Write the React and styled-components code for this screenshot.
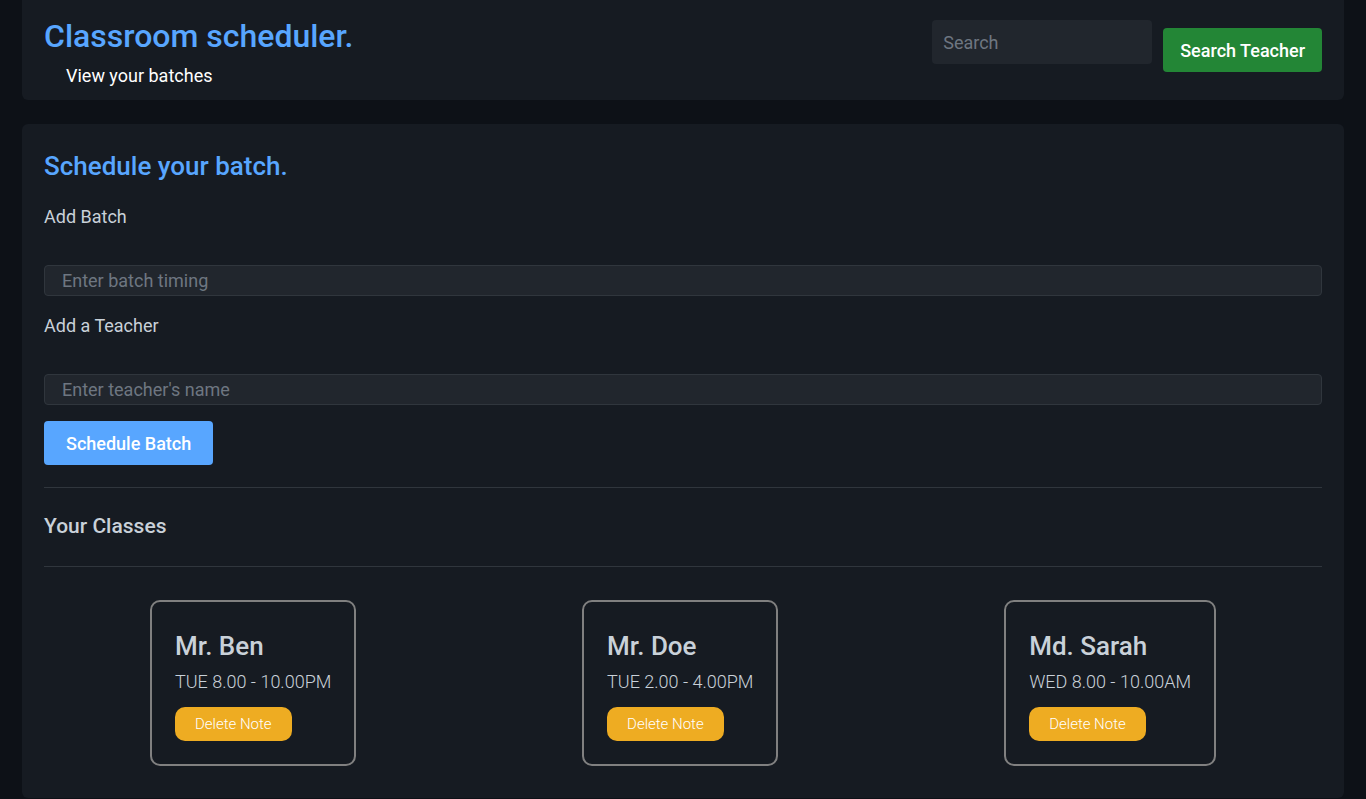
import React from "react";
import styled, {createGlobalStyle} from "styled-components";

const GlobalStyle = createGlobalStyle`
  body {
    margin: 0;
    background: #0d1117;
    font-family: Roboto, "Liberation Sans", sans-serif;
    color: #c9d1d9;
  }
`;

const Page = styled.div`
  padding: 0 22px 2px;
  display: flex;
  flex-direction: column;
  gap: 24px;
`;

const Header = styled.header`
  background: #161b22;
  border-radius: 0 0 6px 6px;
  height: 100px;
  box-sizing: border-box;
  padding: 0 22px;
  display: flex;
  justify-content: space-between;
`;

const Brand = styled.div`
  padding-top: 17px;
`;

const Title = styled.h1`
  margin: 0;
  font-size: 32px;
  font-weight: 500;
  line-height: 38px;
  color: #58a6ff;
`;

const Subtitle = styled.div`
  margin: 10px 0 0 22px;
  font-size: 18px;
  line-height: 22px;
  color: #ffffff;
`;

const SearchArea = styled.div`
  display: flex;
  align-items: flex-start;
  gap: 11px;
  padding-top: 20px;
`;

const SearchInput = styled.input`
  width: 220px;
  height: 44px;
  box-sizing: border-box;
  border: none;
  border-radius: 4px;
  background: #21262d;
  padding: 0 11px;
  font-family: inherit;
  font-size: 18px;
  color: #c9d1d9;
  &::placeholder { color: #6e7681; }
`;

const Button = styled.button`
  display: block;
  height: 44px;
  border: none;
  border-radius: 4px;
  padding: 0 ${p => p.$pad || 17}px;
  background: ${p => p.$bg};
  color: #ffffff;
  font-family: inherit;
  font-size: 18px;
  font-weight: 500;
  margin-top: ${p => p.$top || 0}px;
`;

const Panel = styled.main`
  background: #161b22;
  border-radius: 6px;
  padding: 22px 22px 32px;
`;

const SectionTitle = styled.h2`
  margin: 5px 0 0;
  font-size: 26px;
  font-weight: 500;
  line-height: 30px;
  color: #58a6ff;
`;

const Label = styled.label`
  display: block;
  font-size: 18px;
  line-height: 22px;
  margin-top: ${p => p.$top}px;
  color: #c9d1d9;
`;

const Field = styled.input`
  display: block;
  width: 100%;
  height: 31px;
  box-sizing: border-box;
  margin-top: 37px;
  border: 1px solid #30363d;
  border-radius: 4px;
  background: #21262d;
  padding: 0 17px;
  font-family: inherit;
  font-size: 18px;
  color: #c9d1d9;
  &::placeholder { color: #6e7681; }
`;

const Rule = styled.hr`
  margin: ${p => p.$top}px 0 0;
  border: none;
  border-top: 1px solid #30363d;
`;

const SubHeading = styled.h3`
  margin: 26px 0 28px;
  font-size: 21px;
  font-weight: 500;
  line-height: 24px;
  color: #c9d1d9;
`;

const Cards = styled.div`
  display: flex;
  justify-content: space-between;
  align-items: flex-start;
  margin-top: 33px;
  padding: 0 106px;
`;

const Card = styled.div`
  border: 2px solid #808080;
  border-radius: 10px;
  padding: 29px 23px 23px;
`;

const Name = styled.div`
  font-size: 26px;
  line-height: 30px;
  font-weight: 500;
  color: #c9d1d9;
`;

const Time = styled.div`
  font-size: 18px;
  line-height: 22px;
  font-weight: 300;
  margin-top: 10px;
  color: #c9d1d9;
`;

const DeleteButton = styled.button`
  display: block;
  margin-top: 14px;
  height: 34px;
  padding: 0 20px;
  border: none;
  border-radius: 10px;
  background: #eeac22;
  color: #ffffff;
  font-family: inherit;
  font-size: 15px;
  font-weight: 300;
`;

const classes = [
  {name: "Mr. Ben", time: "TUE 8.00 - 10.00PM"},
  {name: "Mr. Doe", time: "TUE 2.00 - 4.00PM"},
  {name: "Md. Sarah", time: "WED 8.00 - 10.00AM"},
];

export default function App() {
  return (
    <>
      <GlobalStyle/>
      <Page>
        <Header>
          <Brand>
            <Title>Classroom scheduler.</Title>
            <Subtitle>View your batches</Subtitle>
          </Brand>
          <SearchArea>
            <SearchInput placeholder="Search"/>
            <Button $bg="#238636" $top={8}>Search Teacher</Button>
          </SearchArea>
        </Header>
        <Panel>
          <SectionTitle>Schedule your batch.</SectionTitle>
          <Label $top={25}>Add Batch</Label>
          <Field placeholder="Enter batch timing"/>
          <Label $top={19}>Add a Teacher</Label>
          <Field placeholder="Enter teacher's name"/>
          <Button $bg="#58a6ff" $pad={22} $top={16}>Schedule Batch</Button>
          <Rule $top={22}/>
          <SubHeading>Your Classes</SubHeading>
          <Rule $top={0}/>
          <Cards>
            {classes.map(c => (
              <Card key={c.name}>
                <Name>{c.name}</Name>
                <Time>{c.time}</Time>
                <DeleteButton>Delete Note</DeleteButton>
              </Card>
            ))}
          </Cards>
        </Panel>
      </Page>
    </>
  );
}
